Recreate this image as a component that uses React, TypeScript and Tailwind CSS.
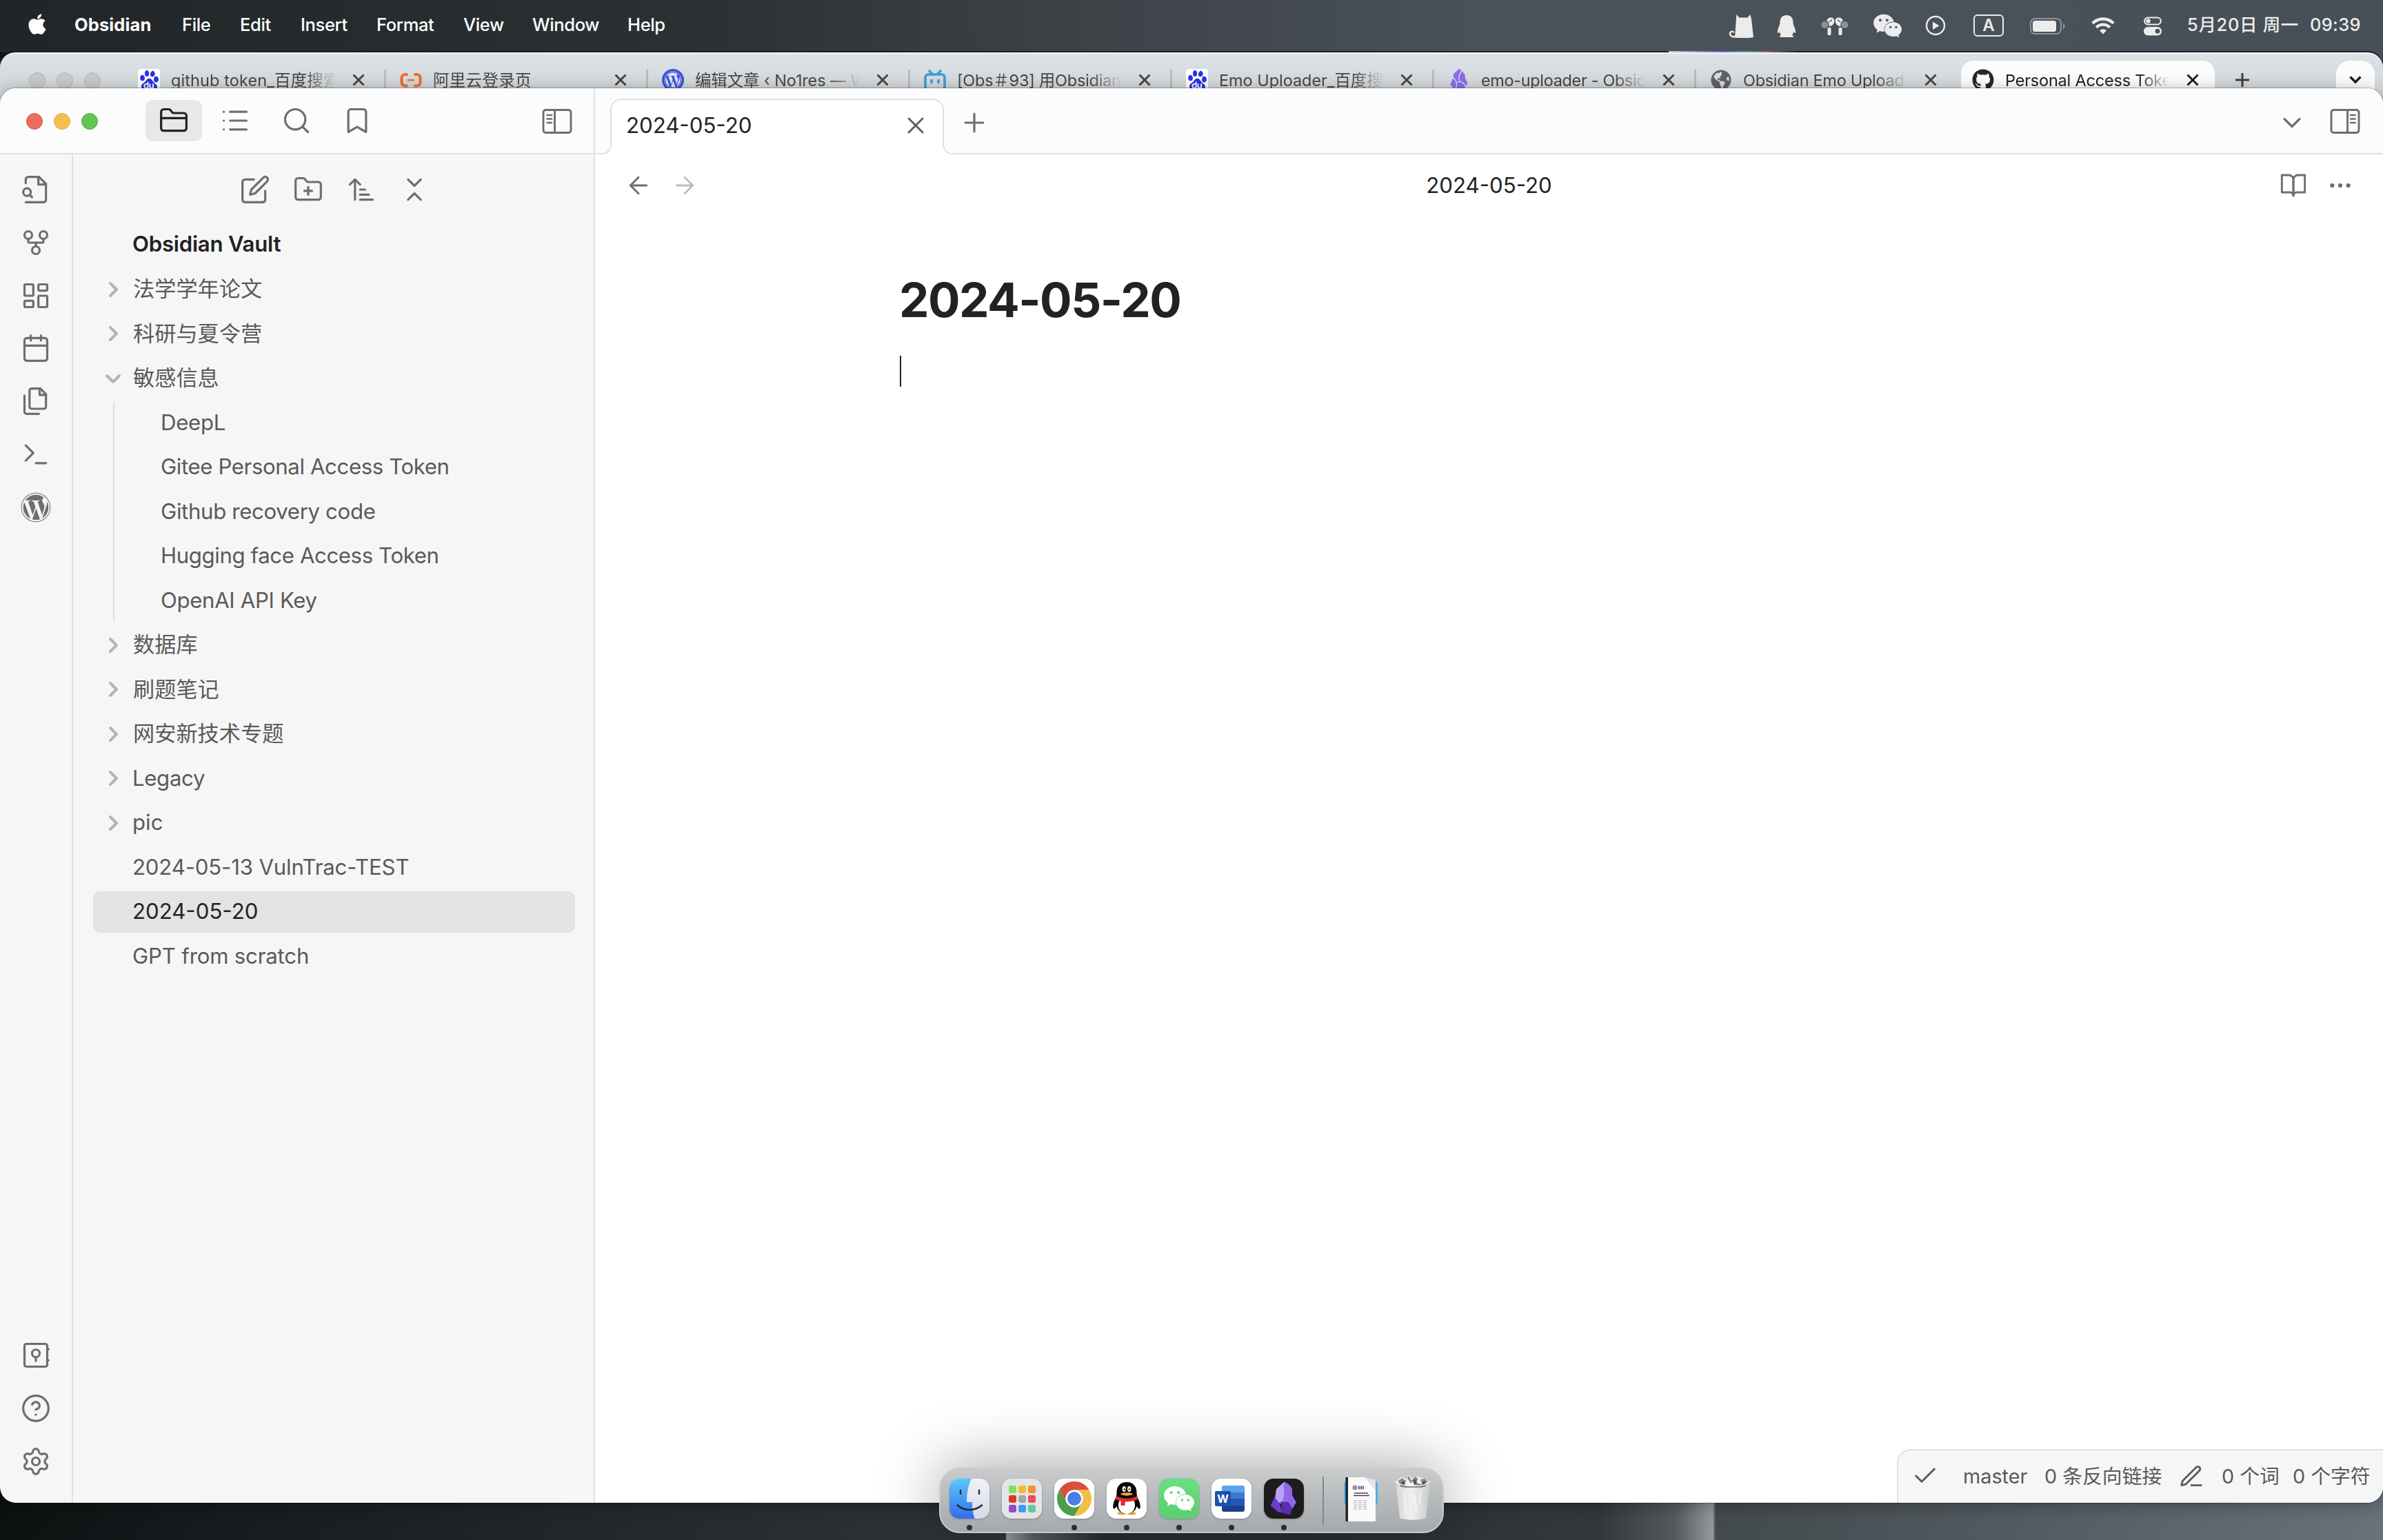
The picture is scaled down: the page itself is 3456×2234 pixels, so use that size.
import React from "react";
import {
  FolderClosed, List, Search, Bookmark, FolderPlus, ArrowUpNarrowWide, ChevronsDownUp,
  GitFork, LayoutDashboard, Calendar, Terminal, CircleHelp, Settings, X, Plus, ChevronDown,
  ArrowLeft, ArrowRight, Ellipsis, Check,
} from "lucide-react";
import { FaApple, FaGithub, FaWordpress, FaGlobeAmericas } from "react-icons/fa";
import { SiWechat, SiBaidu, SiObsidian } from "react-icons/si";

const SW = 1.75;

function Stroke({ size = 44, children, className = "" }: { size?: number; children: React.ReactNode; className?: string }) {
  return (
    <svg width={size} height={size} viewBox="0 0 24 24" fill="none" stroke="currentColor" strokeWidth={SW} strokeLinecap="round" strokeLinejoin="round" className={className}>
      {children}
    </svg>
  );
}

/* ---------- menu bar ---------- */

const menus = [
  { t: "File", w: "w-[84px]" },
  { t: "Edit", w: "w-[88px]" },
  { t: "Insert", w: "w-[110px]" },
  { t: "Format", w: "w-[126px]" },
  { t: "View", w: "w-[100px]" },
  { t: "Window", w: "w-[138px]" },
  { t: "Help", w: "w-[60px]" },
];

function MenuBar() {
  return (
    <div className="flex h-[76px] shrink-0 items-start bg-[linear-gradient(90deg,#212528_0%,#2b3033_29%,#3a4043_43%,#434850_52%,#495159_62%,#495159_85%,#454f58_100%)] text-[25.5px] text-white">
      <div className="flex h-[73px] w-full items-center">
        <FaApple size={34} className="ml-[37px] -mt-[3px]" />
        <div className="ml-[37px] w-[156px] font-bold tracking-[0.1px]">Obsidian</div>
        {menus.map((m) => (
          <div key={m.t} className={m.w + " shrink-0 whitespace-nowrap font-medium tracking-[-0.35px]"}>{m.t}</div>
        ))}
        <div className="ml-auto flex items-center text-[#ececec]">
          <svg width="36" height="36" viewBox="0 0 36 36" className="mr-[34px] mt-[2px]">
            <path d="M11 1l4.500 4.500h12L31 1l2 6 3 27c-8 1.500-20 1.300-27 .5L11 7z" fill="currentColor" />
            <path d="M10 33.500C3 34 .8 29.500 2.500 27 4 25 6.500 25.500 7 26.500" fill="none" stroke="currentColor" strokeWidth="2.400" strokeLinecap="round" />
          </svg>
          <svg width="28" height="34" viewBox="0 0 28 34" className="mr-[36px] mt-[2px]">
            <path d="M14 1c6 0 9.500 4 9.500 10 0 2 .2 3 1 5 1.500 3.500 3 7 2.500 10.500-.3 1.200-1.500.3-2.800-1.500-.3 2-1 3.500-2.200 5 2 .8 2.500 3 1 3H5c-1.500 0-1-2.200 1-3-1.200-1.500-1.900-3-2.200-5C2.500 26.800 1.300 27.700 1 26.500.5 23 2 19.500 3.500 16c.8-2 1-3 1-5C4.500 5 8 1 14 1z" fill="currentColor" />
          </svg>
          <svg width="40" height="28" viewBox="0 0 40 28" className="mr-[36px] mt-[2px]">
            {["", "translate(40 0) scale(-1 1)"].map((t) => (
              <g key={t} transform={t}>
                <circle cx="5.500" cy="12" r="5" fill="#8d9296" />
                <path d="M8 6c1-3 4-5 7-4.500 4 .5 5 4 4 7-1 3.500-4 5.500-7.500 5.500C12 10 11 7 8 6z" fill="currentColor" />
                <rect x="9.500" y="16" width="5" height="11" rx="1.500" fill="currentColor" />
                <path d="M12.500 7.500l3-2.500" stroke="#495159" strokeWidth="1.500" strokeLinecap="round" />
              </g>
            ))}
          </svg>
          <SiWechat size={41} className="mr-[34px] mt-[2px]" />
          <svg width="30" height="30" viewBox="0 0 30 30" className="mr-[40px]">
            <circle cx="15" cy="15" r="13" fill="none" stroke="currentColor" strokeWidth="2.400" />
            <path d="M11 9.500v11.500l9.500-5.700z" fill="currentColor" />
          </svg>
          <div className="mr-[38px] mt-[1px] flex h-8 w-11 items-center justify-center rounded-[6px] border-2 border-[#ececec] text-[24px] font-semibold">A</div>
          <svg width="52" height="24" viewBox="0 0 52 24" className="mr-[37px] mt-[2px]">
            <rect x="1" y="1" width="44" height="22" rx="6.500" fill="none" stroke="#8f959a" strokeWidth="2" />
            <rect x="4" y="4" width="34" height="16" rx="3.500" fill="currentColor" />
            <path d="M48 8c3.500 1 3.500 7 0 8z" fill="#8f959a" />
          </svg>
          <svg width="34" height="26" viewBox="0 0 34 26" className="mr-[42px]" fill="none" stroke="currentColor" strokeWidth="4.400">
            <path d="M1.800 9.800C10 1.300 24 1.300 32.200 9.800" />
            <path d="M7.300 15.700C12.500 10.300 21.500 10.300 26.700 15.700" />
            <path d="M17 25.500l-5-5.200c2.600-2.700 7.400-2.700 10 0z" fill="currentColor" stroke="none" />
          </svg>
          <svg width="26" height="28" viewBox="0 0 26 28" className="mr-[37px] mt-[2px]">
            <rect x="1.200" y="1.500" width="23.600" height="10" rx="5" fill="none" stroke="currentColor" strokeWidth="2.200" />
            <circle cx="6.500" cy="6.500" r="3.200" fill="currentColor" />
            <rect y="15" width="26" height="12.500" rx="6.200" fill="currentColor" />
            <circle cx="20" cy="21.200" r="3.400" fill="#495159" />
          </svg>
          <div className="w-[178px] whitespace-nowrap font-medium tracking-[0.65px]">5月20日 周一</div>
          <div className="mr-[33px] w-[73px] whitespace-nowrap font-medium tracking-[0.3px]">09:39</div>
        </div>
      </div>
    </div>
  );
}

/* ---------- browser strip ---------- */

const BaiduIcon = () => (
  <div className="flex h-8 w-8 items-center justify-center rounded-[4px] bg-white"><SiBaidu size={29} color="#2932e1" /></div>
);

const AliyunIcon = () => (
  <svg width="32" height="32" viewBox="0 0 32 32" fill="none" stroke="#ee6f2d" strokeWidth="4.200">
    <path d="M11.500 8H7.500A5 5 0 0 0 2.500 13v6.500a5 5 0 0 0 5 5h4M20.500 8h4a5 5 0 0 1 5 5v6.500a5 5 0 0 1-5 5h-4" />
    <path d="M11 16.200h10" strokeWidth="2.600" />
  </svg>
);

const WpBlue = () => (
  <div className="flex h-8 w-8 items-center justify-center rounded-full bg-[#3d50d8]"><FaWordpress size={26} color="#dfe3fb" /></div>
);

const BiliIcon = () => (
  <svg width="32" height="32" viewBox="0 0 32 32" fill="none" stroke="#3f9bd1" strokeWidth="3.600" strokeLinecap="round">
    <rect x="2" y="8" width="28" height="22" rx="4" />
    <path d="M8 3l4 4M24 3l-4 4M11 16.500v3M21 16.500v3" />
  </svg>
);

const tabs: { icon: React.ReactNode; title: string; active?: boolean; sep?: boolean; tr: string }[] = [
  { icon: <BaiduIcon />, title: "github token_百度搜索", sep: true, tr: "tracking-[0.1px]" },
  { icon: <AliyunIcon />, title: "阿里云登录页", sep: true, tr: "tracking-[0.3px]" },
  { icon: <WpBlue />, title: "编辑文章 ‹ No1res — W", sep: true, tr: "tracking-[-0.15px]" },
  { icon: <BiliIcon />, title: "[Obs＃93] 用Obsidian", sep: true, tr: "tracking-[-0.25px]" },
  { icon: <BaiduIcon />, title: "Emo Uploader_百度搜索", sep: true, tr: "tracking-[-0.05px]" },
  { icon: <SiObsidian size={32} color="#8b6cef" />, title: "emo-uploader - Obsidian", sep: true, tr: "tracking-[-0.35px]" },
  { icon: <FaGlobeAmericas size={30} color="#5f6368" />, title: "Obsidian Emo Upload", tr: "tracking-[-0.3px]" },
  { icon: <FaGithub size={32} color="#24292f" />, title: "Personal Access Token", active: true, tr: "tracking-[-0.2px]" },
];

function BrowserStrip() {
  return (
    <div className="relative h-[92px] shrink-0 bg-[linear-gradient(90deg,#101314,#45505a)]">
      <div className="flex h-full items-start rounded-t-[22px] border-t-2 border-[#f4f5f8] bg-[linear-gradient(180deg,#dde2e6_0%,#d2d7db_50px)] pt-[10px] shadow-[0_-1px_0_1px_#1b1e22]">
        <div className="mt-[17px] ml-[42px] flex w-[142px] gap-4">
          {[0, 1, 2].map((i) => (
            <div key={i} className="h-6 w-6 rounded-full border border-[#b1b4b6] bg-[#c8cacc]" />
          ))}
        </div>
        {tabs.map((t, i) => (
          <div key={i} className="flex w-[380px] shrink-0">
            <div className={"flex h-[80px] w-[368px] items-start rounded-t-[18px] pt-[12px] pl-4 " + (t.active ? "bg-[#fcfcfc] text-[#1f1f1f]" : "text-[#454746]")}>
              <div className="flex h-8 w-8 items-center justify-center">{t.icon}</div>
              <div className={"ml-[16px] h-8 w-[241px] overflow-hidden whitespace-nowrap text-[23.5px] leading-[33px] [mask-image:linear-gradient(90deg,#000_80%,transparent_99%)] " + t.tr}>{t.title}</div>
              <svg width="18" height="18" viewBox="0 0 18 18" className="mt-[7px] ml-[22px]" stroke="currentColor" strokeWidth="3"><path d="M1.500 1.500l15 15M16.500 1.500l-15 15" /></svg>
            </div>
            {t.sep && <div className="mt-[13px] ml-[5px] h-[40px] w-[3px] bg-[#b9bbbd]" />}
          </div>
        ))}
        <svg width="20" height="20" viewBox="0 0 20 20" className="mt-[18px] ml-[18px]" stroke="#3c3e40" strokeWidth="3"><path d="M0 10h20M10 0v20" /></svg>
        <div className="ml-[126px] flex h-[56px] w-14 justify-center rounded-t-[20px] bg-[#fcfcfc]">
          <svg width="18" height="14" viewBox="0 0 18 14" className="mt-[21px]" fill="none" stroke="#1f1f1f" strokeWidth="3.400"><path d="M1.500 2.500L9 10l7.500-7.500" /></svg>
        </div>
      </div>
      <div className="absolute -top-[2px] left-[2420px] h-[2px] w-[190px] bg-[linear-gradient(90deg,#c4c8cc,#6a6ad0_40%,#5aa880_60%,#a06058_75%,transparent)]" />
    </div>
  );
}

/* ---------- Obsidian window ---------- */

function PanelIcon({ flip = false }: { flip?: boolean }) {
  return (
    <svg width="44" height="38" viewBox="0 0 44 38" fill="none" stroke="currentColor" strokeWidth="2.900" className={flip ? "-scale-x-100" : ""}>
      <rect x="2" y="2.500" width="40" height="33" rx="3.500" />
      <path d="M18.500 2.500v33" />
      <path d="M7.500 10h6.500M7.500 15.500h6.500M7.500 21h6.500" strokeLinecap="round" strokeWidth="2.700" />
    </svg>
  );
}

function LeftHeader() {
  return (
    <div className="flex h-24 shrink-0 items-center border-b-2 border-[#e0e0e0] bg-[#fcfcfc] pt-[2px] pl-[38px] text-[#6e6e6e]">
      <div className="flex gap-4">
        <div className="h-6 w-6 rounded-full border border-[#d9594d] bg-[#ed6b60]" />
        <div className="h-6 w-6 rounded-full border border-[#dda73c] bg-[#f5bf4f]" />
        <div className="h-6 w-6 rounded-full border border-[#52a940] bg-[#62c654]" />
      </div>
      <div className="-mt-[2px] ml-[69px] flex gap-[7px]">
        <div className="flex h-[60px] w-[82px] items-center justify-center rounded-[10px] bg-[#e8e8e8] text-[#222]"><FolderClosed size={44} strokeWidth={SW} /></div>
        <div className="flex h-[60px] w-[82px] items-center justify-center"><List size={44} strokeWidth={SW} /></div>
        <div className="flex h-[60px] w-[81px] items-center justify-center"><Search size={44} strokeWidth={SW} /></div>
        <div className="flex h-[60px] w-[82px] items-center justify-center"><Bookmark size={44} strokeWidth={SW} /></div>
      </div>
      <div className="mr-[31px] ml-auto"><PanelIcon /></div>
    </div>
  );
}

function Ribbon() {
  return (
    <div className="flex w-[106px] shrink-0 flex-col items-center justify-between border-r-2 border-[#e0e0e0] pt-[29px] pr-[1px] pb-[38px] text-[#6e6e6e]">
      <div className="flex flex-col gap-[32.800px]">
        <Stroke>
          <path d="M4 22h14a2 2 0 0 0 2-2V7.500L14.500 2H6a2 2 0 0 0-2 2v3" />
          <path d="M14 2v6h6" />
          <circle cx="5" cy="14" r="3" />
          <path d="M9 18l-1.500-1.500" />
        </Stroke>
        <GitFork size={44} strokeWidth={SW} />
        <LayoutDashboard size={44} strokeWidth={SW} />
        <Calendar size={44} strokeWidth={SW} />
        <Stroke>
          <path d="M15.500 2H8.600c-.4 0-.8.2-1.100.5-.3.3-.5.7-.5 1.100v12.800c0 .4.2.8.5 1.100.3.3.7.5 1.100.5h9.800c.4 0 .8-.2 1.100-.5.3-.3.5-.7.5-1.100V6.500L15.500 2z" />
          <path d="M3 7.600v12.800c0 .4.2.8.5 1.100.3.3.7.5 1.100.5h9.800" />
          <path d="M15 2v5h5" />
        </Stroke>
        <Terminal size={44} strokeWidth={SW} />
        <FaWordpress size={44} />
      </div>
      <div className="flex flex-col gap-[32.800px]">
        <Stroke>
          <rect x="3" y="3" width="18" height="18" rx="1.500" />
          <circle cx="12" cy="10.500" r="3" />
          <path d="M12 13.500v3M21 7.200h1M21 16h1" />
        </Stroke>
        <CircleHelp size={44} strokeWidth={SW} />
        <Settings size={44} strokeWidth={SW} />
      </div>
    </div>
  );
}

function Chevron({ open = false }: { open?: boolean }) {
  return (
    <svg width="24" height="24" viewBox="0 0 24 24" fill="none" stroke="#b3b3b3" strokeWidth="4" strokeLinecap="round" strokeLinejoin="round" className={open ? "" : "-rotate-90"}>
      <path d="M3 8L12 17L21 8" />
    </svg>
  );
}

function Row({ label, folder, open, active, child, tr = "" }: { label: string; folder?: boolean; open?: boolean; active?: boolean; child?: boolean; tr?: string }) {
  return (
    <div className="flex h-[64.500px] items-center">
      <div className={"flex h-[60px] w-full items-center rounded-[10px] " + (active ? "bg-[#e3e3e3] text-[#222]" : "")}>
        {folder ? <div className="mr-[17px] ml-[17px]"><Chevron open={open} /></div> : <div className={child ? "w-[98px]" : "w-[57px]"} />}
        <span className={"whitespace-nowrap " + tr}>{label}</span>
      </div>
    </div>
  );
}

function Explorer() {
  return (
    <div className="flex-1 text-[31.200px] text-[#5a5a5a]">
      <div className="flex h-[99px] justify-center gap-[33px] pt-[29px] pl-[3px] text-[#6e6e6e]">
        <Stroke>
          <path d="M11 4H4a2 2 0 0 0-2 2v14a2 2 0 0 0 2 2h14a2 2 0 0 0 2-2v-7" />
          <path d="M18.500 2.500a2.121 2.121 0 0 1 3 3L12 15l-4 1 1-4 9.500-9.500z" />
        </Stroke>
        <FolderPlus size={44} strokeWidth={SW} />
        <ArrowUpNarrowWide size={44} strokeWidth={SW} />
        <ChevronsDownUp size={44} strokeWidth={SW} />
      </div>
      <div className="ml-[29px] w-[699px]">
        <div className="flex h-[64.500px] items-center pb-[2px] pl-[57px] font-semibold tracking-[-0.25px] text-[#222]">Obsidian Vault</div>
        <Row folder label="法学学年论文" />
        <Row folder label="科研与夏令营" />
        <Row folder open label="敏感信息" />
        <div className="relative">
          <div className="absolute inset-y-[2px] left-[29px] w-[2px] bg-[#dfdfdf]" />
          <Row child label="DeepL" tr="tracking-[-0.3px]" />
          <Row child label="Gitee Personal Access Token" tr="tracking-[-0.4px]" />
          <Row child label="Github recovery code" tr="tracking-[-0.35px]" />
          <Row child label="Hugging face Access Token" tr="tracking-[-0.4px]" />
          <Row child label="OpenAI API Key" tr="tracking-[-0.35px]" />
        </div>
        <Row folder label="数据库" />
        <Row folder label="刷题笔记" />
        <Row folder label="网安新技术专题" />
        <Row folder label="Legacy" tr="-ml-[1px] tracking-[-0.35px]" />
        <Row folder label="pic" tr="-ml-[1px]" />
        <Row label="2024-05-13 VulnTrac-TEST" tr="tracking-[-0.18px]" />
        <Row label="2024-05-20" active />
        <Row label="GPT from scratch" tr="tracking-[-0.2px]" />
      </div>
    </div>
  );
}

function NoteTab() {
  return (
    <div className="relative -mb-[2px] ml-[22px] flex h-[81px] w-[484px] items-center rounded-t-[16px] border-x-2 border-t-2 border-[#e0e0e0] bg-white pl-[21px] text-[31.200px] text-[#222]">
      <div className="absolute bottom-0 -left-[16px] h-4 w-4 bg-white">
        <div className="h-4 w-4 rounded-br-[14px] border-r-2 border-b-2 border-[#e0e0e0] bg-[#fcfcfc]" />
      </div>
      <div className="absolute -right-[16px] bottom-0 h-4 w-4 bg-white">
        <div className="h-4 w-4 rounded-bl-[14px] border-b-2 border-l-2 border-[#e0e0e0] bg-[#fcfcfc]" />
      </div>
      <span className="-mt-[4px]">2024-05-20</span>
      <X size={40} strokeWidth={SW} className="-mt-[6px] mr-[19px] ml-auto text-[#5c5c5c]" />
    </div>
  );
}

function StatusBar() {
  return (
    <div className="mt-auto ml-auto flex h-[78px] w-[705px] items-center rounded-tl-[20px] border-t-2 border-l-2 border-[#e0e0e0] bg-[#f6f6f6] text-[28.800px] whitespace-nowrap text-[#5a5a5a]">
      <Check size={40} strokeWidth={SW} className="-mt-[2px] ml-[19px]" />
      <div className="ml-[35px] w-[118px]">master</div>
      <div className="w-[194px]">0 条反向链接</div>
      <Stroke size={38}>
        <path d="M12 20h9" />
        <path d="M16.500 3.500a2.121 2.121 0 0 1 3 3L7 19l-4 1 1-4L16.500 3.500z" />
      </Stroke>
      <div className="ml-[25px] w-[102px]">0 个词</div>
      <div className="ml-[1px]">0 个字符</div>
    </div>
  );
}

function Main() {
  return (
    <div className="flex min-w-0 flex-1 flex-col bg-white text-[#6e6e6e]">
      <div className="flex h-24 shrink-0 items-end border-b-2 border-[#e0e0e0] bg-[#fcfcfc]">
        <NoteTab />
        <Plus size={44} strokeWidth={SW} className="mb-[22px] ml-[22px]" />
        <ChevronDown size={44} strokeWidth={SW} className="mr-[33px] mb-[22px] ml-auto" />
        <div className="mr-[33px] mb-[27px]"><PanelIcon flip /></div>
      </div>
      <div className="flex h-[90px] items-center">
        <div className="flex w-[200px] gap-[27px] pl-[43px]">
          <ArrowLeft size={40} strokeWidth={SW} />
          <ArrowRight size={40} strokeWidth={SW} className="text-[#bdbdbd]" />
        </div>
        <div className="flex-1 text-center text-[31.200px] text-[#222]">2024-05-20</div>
        <div className="flex w-[200px] justify-end gap-[28px] pr-[42px]">
          <Stroke size={40}>
            <path d="M2 3h6a4 4 0 0 1 4 4v14a3 3 0 0 0-3-3H2z" />
            <path d="M22 3h-6a4 4 0 0 0-4 4v14a3 3 0 0 1 3-3h7z" />
          </Stroke>
          <Ellipsis size={40} strokeWidth={1.75} />
        </div>
      </div>
      <div className="mt-[76px] ml-[441px] text-[69px] leading-[90px] font-bold tracking-[-1.450px] text-[#222]">2024-05-20</div>
      <div className="mt-[36px] ml-[442px] h-[45px] w-[2px] bg-[#222]" />
      <StatusBar />
    </div>
  );
}

function ObsidianWindow() {
  return (
    <div className="relative -mt-10 flex h-[2052px] shrink-0 overflow-hidden rounded-[23px] shadow-[0_0_0_1px_rgba(0,0,0,0.25),0_4px_24px_rgba(0,0,0,0.3)]">
      <div className="flex w-[863px] shrink-0 flex-col border-r-2 border-[#e0e0e0] bg-[#f6f6f6]">
        <LeftHeader />
        <div className="flex flex-1">
          <Ribbon />
          <Explorer />
        </div>
      </div>
      <Main />
    </div>
  );
}

/* ---------- dock ---------- */

function Tile({ children, dot = true }: { children: React.ReactNode; dot?: boolean }) {
  return (
    <div className="flex w-[58px] flex-col items-center">
      <div className="flex h-[58px] w-[58px] items-center justify-center overflow-hidden rounded-[14px] shadow-[0_1px_3px_rgba(0,0,0,0.25)]">{children}</div>
      {dot && <div className="mt-[9px] h-2 w-2 rounded-full bg-[#2c2f32]" />}
    </div>
  );
}

const padColors = ["#7ee35c", "#f5bb35", "#ef9334", "#d83a2a", "#a2a6a8", "#ee4a5f", "#9a48d0", "#3d9bf6", "#62c9a0"];

function Dock() {
  return (
    <div className="absolute top-[2129px] left-[1362px] flex h-[95px] w-[732px] items-start gap-[18px] rounded-[30px] border-2 border-[#c9cbcc] bg-[linear-gradient(180deg,#c9cbcc,#a5a9ac)] pt-[14px] pl-[13px] shadow-[0_0_90px_rgba(0,0,0,0.38)]">
      <Tile>
        <svg width="58" height="58" viewBox="0 0 58 58">
          <defs>
            <linearGradient id="fb" x2="0" y2="1"><stop stopColor="#5cc8fa" /><stop offset="1" stopColor="#356bee" /></linearGradient>
            <linearGradient id="fw" x2="0" y2="1"><stop stopColor="#f1f2f4" /><stop offset="1" stopColor="#d3daea" /></linearGradient>
          </defs>
          <rect width="58" height="58" fill="url(#fw)" />
          <path d="M0 0h32c-5 10-7 22-7 34h8c0 9 1 17 3.500 24H0z" fill="url(#fb)" />
          <path d="M16 17v5M43 17v5M11.500 38.500c10 9 25 9 35.500 0" fill="none" stroke="#1d2c45" strokeWidth="2.400" strokeLinecap="round" />
        </svg>
      </Tile>
      <Tile dot={false}>
        <div className="grid h-full w-full grid-cols-[11px_11px_11px] place-content-center gap-[3px] bg-[#e4e5e7]">
          {padColors.map((c) => (
            <div key={c} className="h-[11px] w-[11px] rounded-[3px]" style={{ background: c }} />
          ))}
        </div>
      </Tile>
      <Tile>
        <svg width="58" height="58" viewBox="-29 -29 58 58">
          <rect x="-29" y="-29" width="58" height="58" fill="#fff" />
          {[["#d94f3d", 0], ["#f2bf42", 120], ["#4c9d4f", 240]].map(([c, r]) => (
            <path key={c} transform={`rotate(${r})`} d="M-21.650-12.500A25 25 0 0 1 21.650-12.500H0A12.500 12.500 0 0 0-10.830 6.250Z" fill={c as string} />
          ))}
          <circle r="12.500" fill="#fff" />
          <circle r="10" fill="#4a7fe8" />
        </svg>
      </Tile>
      <Tile>
        <svg width="58" height="58" viewBox="0 0 58 58">
          <rect width="58" height="58" fill="#fff" />
          <ellipse cx="22" cy="50.500" rx="7" ry="2.200" fill="#f0a52f" />
          <ellipse cx="36" cy="50.500" rx="7" ry="2.200" fill="#f0a52f" />
          <path d="M29 5c9 0 14.500 6 14.500 15 0 4 .5 6 2 9 2.500 5 4 10 3 14-.8 2-3 0-5-3-1 6-6 11-14.500 11S15.500 46 14.500 40c-2 3-4.200 5-5 3-1-4 .5-9 3-14 1.500-3 2-5 2-9C14.500 11 20 5 29 5z" fill="#060606" />
          <path d="M29 29c8 0 12 2 12 9 0 8-4.500 13-12 13s-12-5-12-13c0-7 4-9 12-9z" fill="#fff" />
          <path d="M14 25c9 5 21 5 30 0l1.500 5c-5 2.500-12 3.800-19 3.500V39h-6v-6.500c-3-.5-6-1.500-8-2.500z" fill="#dd2b26" />
          <ellipse cx="25.300" cy="15" rx="2.700" ry="3.900" fill="#fff" /><ellipse cx="32.700" cy="15" rx="2.700" ry="3.900" fill="#fff" />
          <circle cx="26" cy="15.500" r="1.300" /><path d="M31.500 16c.5-1.500 2-1.500 2.500 0" fill="none" stroke="#000" strokeWidth="1.200" />
          <path d="M20 22c3-2.500 15-2.500 18 0-3 3.500-15 3.500-18 0z" fill="#f2a630" />
        </svg>
      </Tile>
      <Tile>
        <div className="flex h-full w-full items-center justify-center bg-[linear-gradient(180deg,#68df80,#5bcf70)] text-white"><SiWechat size={44} /></div>
      </Tile>
      <Tile>
        <div className="relative h-full w-full bg-white">
          <div className="absolute top-[10px] left-[15px] flex h-[38px] w-[33px] flex-col overflow-hidden rounded-[3px]">
            <div className="flex-1 bg-[#5ba3ea]" /><div className="flex-1 bg-[#3d79d3]" /><div className="flex-1 bg-[#2957b5]" /><div className="flex-1 bg-[#1c3e8e]" />
          </div>
          <div className="absolute top-[18px] left-[5px] flex h-[22px] w-[23px] items-center justify-center rounded-[2px] bg-[#1d4fae] text-[16px] font-bold text-white">W</div>
        </div>
      </Tile>
      <Tile>
        <svg width="58" height="58" viewBox="0 0 58 58">
          <rect width="58" height="58" fill="#1c1c1d" />
          <path d="M29.500 4.500L18 15l-2 14-3.500 5 14 2 9-3z" fill="#b9a0f6" />
          <path d="M29.500 4.500C34 6 40 11 41 15v9l6 10.500L41 44 36 35 27 31C32 21 27 14 29.500 4.500z" fill="#8f68e8" />
          <path d="M15.500 27.500L9.500 39 21 48.500l5 .5C25 42 22 32 15.500 27.500z" fill="#6b3fd0" />
          <path d="M24 33.500c8-2 14 2 17 10.500l-3 8.500c-4 .5-8-2.500-15-3.500 4-5 3.500-10 1-15.500z" fill="#5a2cae" />
        </svg>
      </Tile>
      <div className="mt-[-3px] ml-[9px] h-[70px] w-[2px] bg-[#83878a]" />
      <svg width="50" height="66" viewBox="0 0 50 66" className="-mt-[3px] ml-[11px]">
        <rect x="0" y="6" width="49" height="36" rx="5" fill="#55aee8" />
        <rect x="2.500" y="1" width="5" height="64" fill="#222" />
        <path d="M6 1h25l15 20v44H6z" fill="#fafafa" />
        <path d="M30 1l16 4v16H31z" fill="#e4e4e4" /><path d="M30 1l16 20H31z" fill="#fff" />
        <circle cx="16" cy="16" r="3.600" fill="#a883b4" /><path d="M21 16h8" stroke="#77528a" strokeWidth="5" strokeDasharray="2 1" />
        <path d="M15 24h20M14 27.500h23" stroke="#444" strokeWidth="1.500" />
        <path d="M14 35h20M14 38h20M14 41h20M14 44h20M14 47h20" stroke="#999" strokeWidth=".9" strokeDasharray="5 2" />
      </svg>
      <svg width="52" height="68" viewBox="0 0 52 68" className="-mt-[6px] ml-[6px]">
        <defs><linearGradient id="tr"><stop stopColor="#d6d6d5" /><stop offset=".45" stopColor="#f0f0ef" /><stop offset="1" stopColor="#cbcbca" /></linearGradient></defs>
        <path d="M3 8l7-5 6 3 4-5 6 5 6-4 8 3 8 4-4 12H7z" fill="#e9e9e9" />
        <path d="M5 9l6-4 4 4 5-7 4 7 6-6 5 5 8-2 4 4-3 9H8z" fill="#8b8986" />
        <path d="M14 14l4-9 5 8 3-4 3 7H14zM31 12l4-8 5 10z" fill="#f6f6f6" />
        <path d="M9 12l4-3 2 6-5 2zM26 9l3-3 3 6-4 3zM40 11l4-2-1 7-4-1z" fill="#4e5257" />
        <path d="M1 10l1 4c8 8 40 8 48 0l1-4-6 52c-2 5-36 5-38 0z" fill="url(#tr)" />
        <path d="M1 9c2 10 48 10 50 0" fill="none" stroke="#f8f8f8" strokeWidth="1.500" />
        <path d="M14 24l2 34M27 28l5 28M38 24l-3 18" stroke="#fff" strokeWidth="3" opacity=".45" />
      </svg>
    </div>
  );
}

export default function App() {
  return (
    <div className="relative flex h-[2234px] w-[3456px] flex-col overflow-hidden bg-[#15181a] font-['Inter','Noto_Sans_CJK_SC',sans-serif]">
      <MenuBar />
      <BrowserStrip />
      <div className="-mt-10 -mb-[54px] flex h-[2106px] shrink-0 flex-col bg-[linear-gradient(90deg,#0e1112_0px,#171b1d_300px,#2c3134_1300px,#34393c_1458px,#a2a6a8_1460px,#5f6468_1500px,#2c3033_1600px,#2f3437_2100px,#33383b_2320px,#55595e_2430px,#96989e_2484px,#434a4e_2488px,#525a60_2900px,#68727b_3456px)] [clip-path:inset(60px_0_0_0)]" />
      <div className="-mt-[2052px] flex flex-col">
        <div className="h-10" />
        <ObsidianWindow />
      </div>
      <Dock />
    </div>
  );
}
